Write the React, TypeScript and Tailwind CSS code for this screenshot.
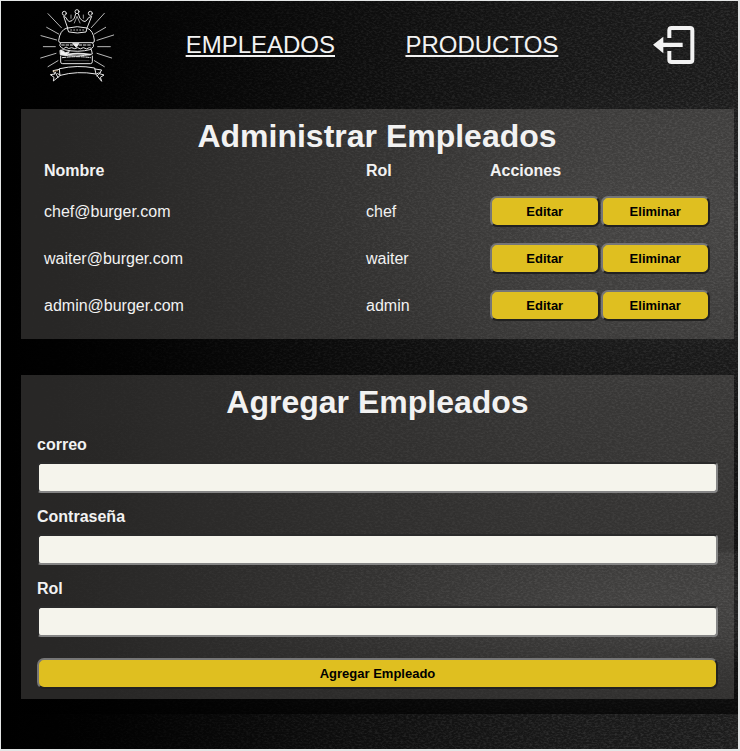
const employees = [
  { email: 'chef@burger.com', role: 'chef' },
  { email: 'waiter@burger.com', role: 'waiter' },
  { email: 'admin@burger.com', role: 'admin' },
];

const fields = [
  { id: 'correo', label: 'correo', type: 'email' },
  { id: 'contrasena', label: 'Contraseña', type: 'password' },
  { id: 'rol', label: 'Rol', type: 'text' },
];

const buttonStyle =
  'rounded-[7px] border-2 border-t-[#767676] border-l-[#767676] border-r-[#212121] border-b-[#212121] bg-[#dfbf20] text-[13px] font-bold text-black';

// Dark slate wall with a floor line, lit from the right.
function SlateBackdrop() {
  return (
    <svg
      className="absolute inset-0 h-full w-full"
      viewBox="0 0 737 748"
      preserveAspectRatio="none"
      aria-hidden="true"
    >
      <defs>
        <linearGradient id="light" x1="0" x2="1" y1="0" y2="0">
          <stop offset="0" stopColor="#000" />
          <stop offset="0.15" stopColor="#020202" />
          <stop offset="0.45" stopColor="#0d0d0d" />
          <stop offset="0.75" stopColor="#181818" />
          <stop offset="1" stopColor="#1c1c1c" />
        </linearGradient>
        <linearGradient id="fade" x1="0" x2="1" y1="0" y2="0">
          <stop offset="0" stopColor="#000" />
          <stop offset="0.1" stopColor="#222" />
          <stop offset="0.5" stopColor="#aaa" />
          <stop offset="1" stopColor="#fff" />
        </linearGradient>
        <linearGradient id="shade" x1="0" x2="0" y1="0" y2="1">
          <stop offset="0" stopColor="#000" stopOpacity="0.1" />
          <stop offset="0.3" stopColor="#000" stopOpacity="0" />
          <stop offset="0.48" stopColor="#000" stopOpacity="0.15" />
          <stop offset="0.65" stopColor="#000" stopOpacity="0.3" />
          <stop offset="0.77" stopColor="#000" stopOpacity="0.4" />
          <stop offset="0.775" stopColor="#000" stopOpacity="0.1" />
          <stop offset="0.88" stopColor="#000" stopOpacity="0.1" />
          <stop offset="0.96" stopColor="#000" stopOpacity="0.5" />
          <stop offset="1" stopColor="#000" stopOpacity="0.65" />
        </linearGradient>
        <radialGradient id="glow">
          <stop offset="0" stopColor="#fff" stopOpacity="0.045" />
          <stop offset="1" stopColor="#fff" stopOpacity="0" />
        </radialGradient>
        <mask id="grainMask">
          <rect width="737" height="748" fill="url(#fade)" />
        </mask>
        <filter id="grain" x="0" y="0" width="100%" height="100%">
          <feTurbulence type="fractalNoise" baseFrequency="0.35 0.6" numOctaves="4" seed="7" />
          <feColorMatrix values="0 0 0 0 1  0 0 0 0 1  0 0 0 0 1  2.6 0 0 0 -1" />
        </filter>
      </defs>
      <rect width="737" height="748" fill="url(#light)" />
      <ellipse cx="640" cy="240" rx="300" ry="170" fill="url(#glow)" />
      <ellipse cx="640" cy="600" rx="320" ry="70" fill="url(#glow)" />
      <g mask="url(#grainMask)">
        <rect width="737" height="748" filter="url(#grain)" opacity="0.1" />
      </g>
      <rect width="737" height="713" fill="url(#shade)" />
    </svg>
  );
}

function BurgerLogo() {
  return (
    <svg
      className="h-[76px] w-[75px]"
      viewBox="30 20 225 228"
      fill="none"
      stroke="#e6e6e6"
      strokeWidth="3"
      strokeLinecap="round"
      strokeLinejoin="round"
      role="img"
      aria-label="Burger"
    >
      {/* rays */}
      <path
        d="M54 40 94 82M50 81 86 101M33 106 80 119M40 139H76M32 173 78 159M54 199 84 181M223 39 184 82M227 81 193 101M251 104 201 120M203 139H241M201 159 245 173M193 181 223 199"
        strokeWidth="2.4"
      />
      {/* crown */}
      <path d="M113 83 101 48Q110 50 112 59Q116 67 126 61Q135 56 137 41M171 83 185 48Q174 50 171 59Q166 67 157 61Q148 56 145 41" />
      <path d="M113 83Q142 75 171 83L168 95Q142 101 117 95Z" />
      <circle cx="103" cy="39" r="6" />
      <circle cx="141" cy="34" r="6" />
      <circle cx="181" cy="39" r="6" />
      <path d="M123 44V54M160 44V54M133 68 141 48 150 68" strokeWidth="2" />
      <path d="M122 89H165" strokeDasharray="3 6" strokeWidth="2.4" />
      {/* top bun */}
      <path d="M110 83Q89 90 86 121Q86 127 92 127H188Q194 127 193 119Q190 91 173 84" />
      {/* fillings */}
      <path d="M91 128Q86 137 94 142Q101 149 108 140Q116 148 125 142Q134 148 143 142Q151 149 160 142Q170 149 178 142Q187 148 190 139Q192 133 188 128" />
      <path d="M95 134H186" strokeDasharray="8 5" />
      <path d="M129 130 139 141 146 130Z" fill="#f2f2f2" />
      <path d="M91 150 103 148Q143 158 184 147L187 161Q142 172 92 163Z" />
      <path d="M93 150 107 157 118 154 110 165 93 163Z" fill="#f2f2f2" />
      <path d="M115 162Q145 157 180 163" strokeWidth="5" />
      {/* bottom bun */}
      <path d="M92 167V185Q92 190 98 190H181Q187 190 187 184V167" />
      <path d="M97 172Q142 166 182 172" strokeDasharray="10 4" />
      <path d="M104 181H177" strokeWidth="1.5" opacity="0.55" />
      {/* ribbon */}
      <path d="M89 205Q142 193 194 203L198 221Q142 211 91 225Z" />
      <path d="M88 207 69 211 75 221 61 223 72 231 70 242 91 225 83 220M195 206 215 209 208 220 222 224 211 231 215 243 198 222 205 218M76 216 84 232M201 227 211 216" />
      <path d="M69 213 83 211" stroke="#d8b98a" strokeWidth="2.4" />
    </svg>
  );
}

function LogoutIcon() {
  return (
    <svg className="size-[74px]" viewBox="-34 -6 222 222" fill="none" aria-hidden="true">
      <path
        d="M87 84V61Q87 54 94 54H149Q156 54 156 61V149Q156 156 149 156H94Q87 156 87 149V123"
        stroke="#f2f2f2"
        strokeWidth="12"
      />
      <path d="M38 104 69 80V98H127V111H69V130Z" fill="#f2f2f2" />
    </svg>
  );
}

function Header() {
  return (
    <header className="flex h-[88px] items-center justify-around pl-1">
      <BurgerLogo />
      <a href="#empleados" className="text-2xl underline">
        EMPLEADOS
      </a>
      <a href="#productos" className="text-2xl underline">
        PRODUCTOS
      </a>
      <button type="button" aria-label="Cerrar sesión">
        <LogoutIcon />
      </button>
    </header>
  );
}

function EmployeeTable() {
  return (
    <section id="empleados" className="bg-[rgba(200,196,190,0.2)] pt-2 pr-6 pb-[10px] pl-[23px]">
      <h1 className="text-center text-[32px] leading-[38px] font-bold">Administrar Empleados</h1>
      <table className="w-full table-fixed text-left text-base">
        <colgroup>
          <col />
          <col className="w-[124px]" />
          <col className="w-[220px]" />
        </colgroup>
        <thead>
          <tr className="h-[33px] align-top leading-8">
            <th>Nombre</th>
            <th>Rol</th>
            <th>Acciones</th>
          </tr>
        </thead>
        <tbody>
          {employees.map((employee) => (
            <tr key={employee.email} className="h-[47px]">
              <td>{employee.email}</td>
              <td>{employee.role}</td>
              <td>
                <div className="flex gap-px">
                  <button type="button" className={`${buttonStyle} h-[31px] flex-1`}>
                    Editar
                  </button>
                  <button type="button" className={`${buttonStyle} h-[31px] flex-1`}>
                    Eliminar
                  </button>
                </div>
              </td>
            </tr>
          ))}
        </tbody>
      </table>
    </section>
  );
}

function EmployeeForm() {
  return (
    <section className="bg-[rgba(200,196,190,0.2)] px-4 pt-2 pb-[10px]">
      <h1 className="text-center text-[32px] leading-[38px] font-bold">Agregar Empleados</h1>
      <form className="mt-3 flex flex-col gap-3">
        {fields.map((field) => (
          <div key={field.id} className="flex flex-col gap-[5px]">
            <label htmlFor={field.id} className="text-base leading-6 font-bold">
              {field.label}
            </label>
            <input
              id={field.id}
              type={field.type}
              className="h-[31px] w-full rounded-[4px] border-2 border-t-[#2a2a2a] border-r-[#858585] border-b-[#858585] border-l-[#2a2a2a] bg-[#f5f4ec] px-2 text-black"
            />
          </div>
        ))}
        <button type="button" className={`${buttonStyle} mt-[9px] h-[31px] w-full`}>
          Agregar Empleado
        </button>
      </form>
    </section>
  );
}

export default function App() {
  return (
    <div className="relative min-h-screen border-t border-r-2 border-b-2 border-l border-[#e4e6e6] bg-black font-['Liberation_Sans',Arial,sans-serif] text-[#f2f2f2]">
      <SlateBackdrop />
      <div className="relative">
        <Header />
        <main className="mt-5 mr-1 ml-5 flex flex-col gap-9">
          <EmployeeTable />
          <EmployeeForm />
        </main>
      </div>
    </div>
  );
}
